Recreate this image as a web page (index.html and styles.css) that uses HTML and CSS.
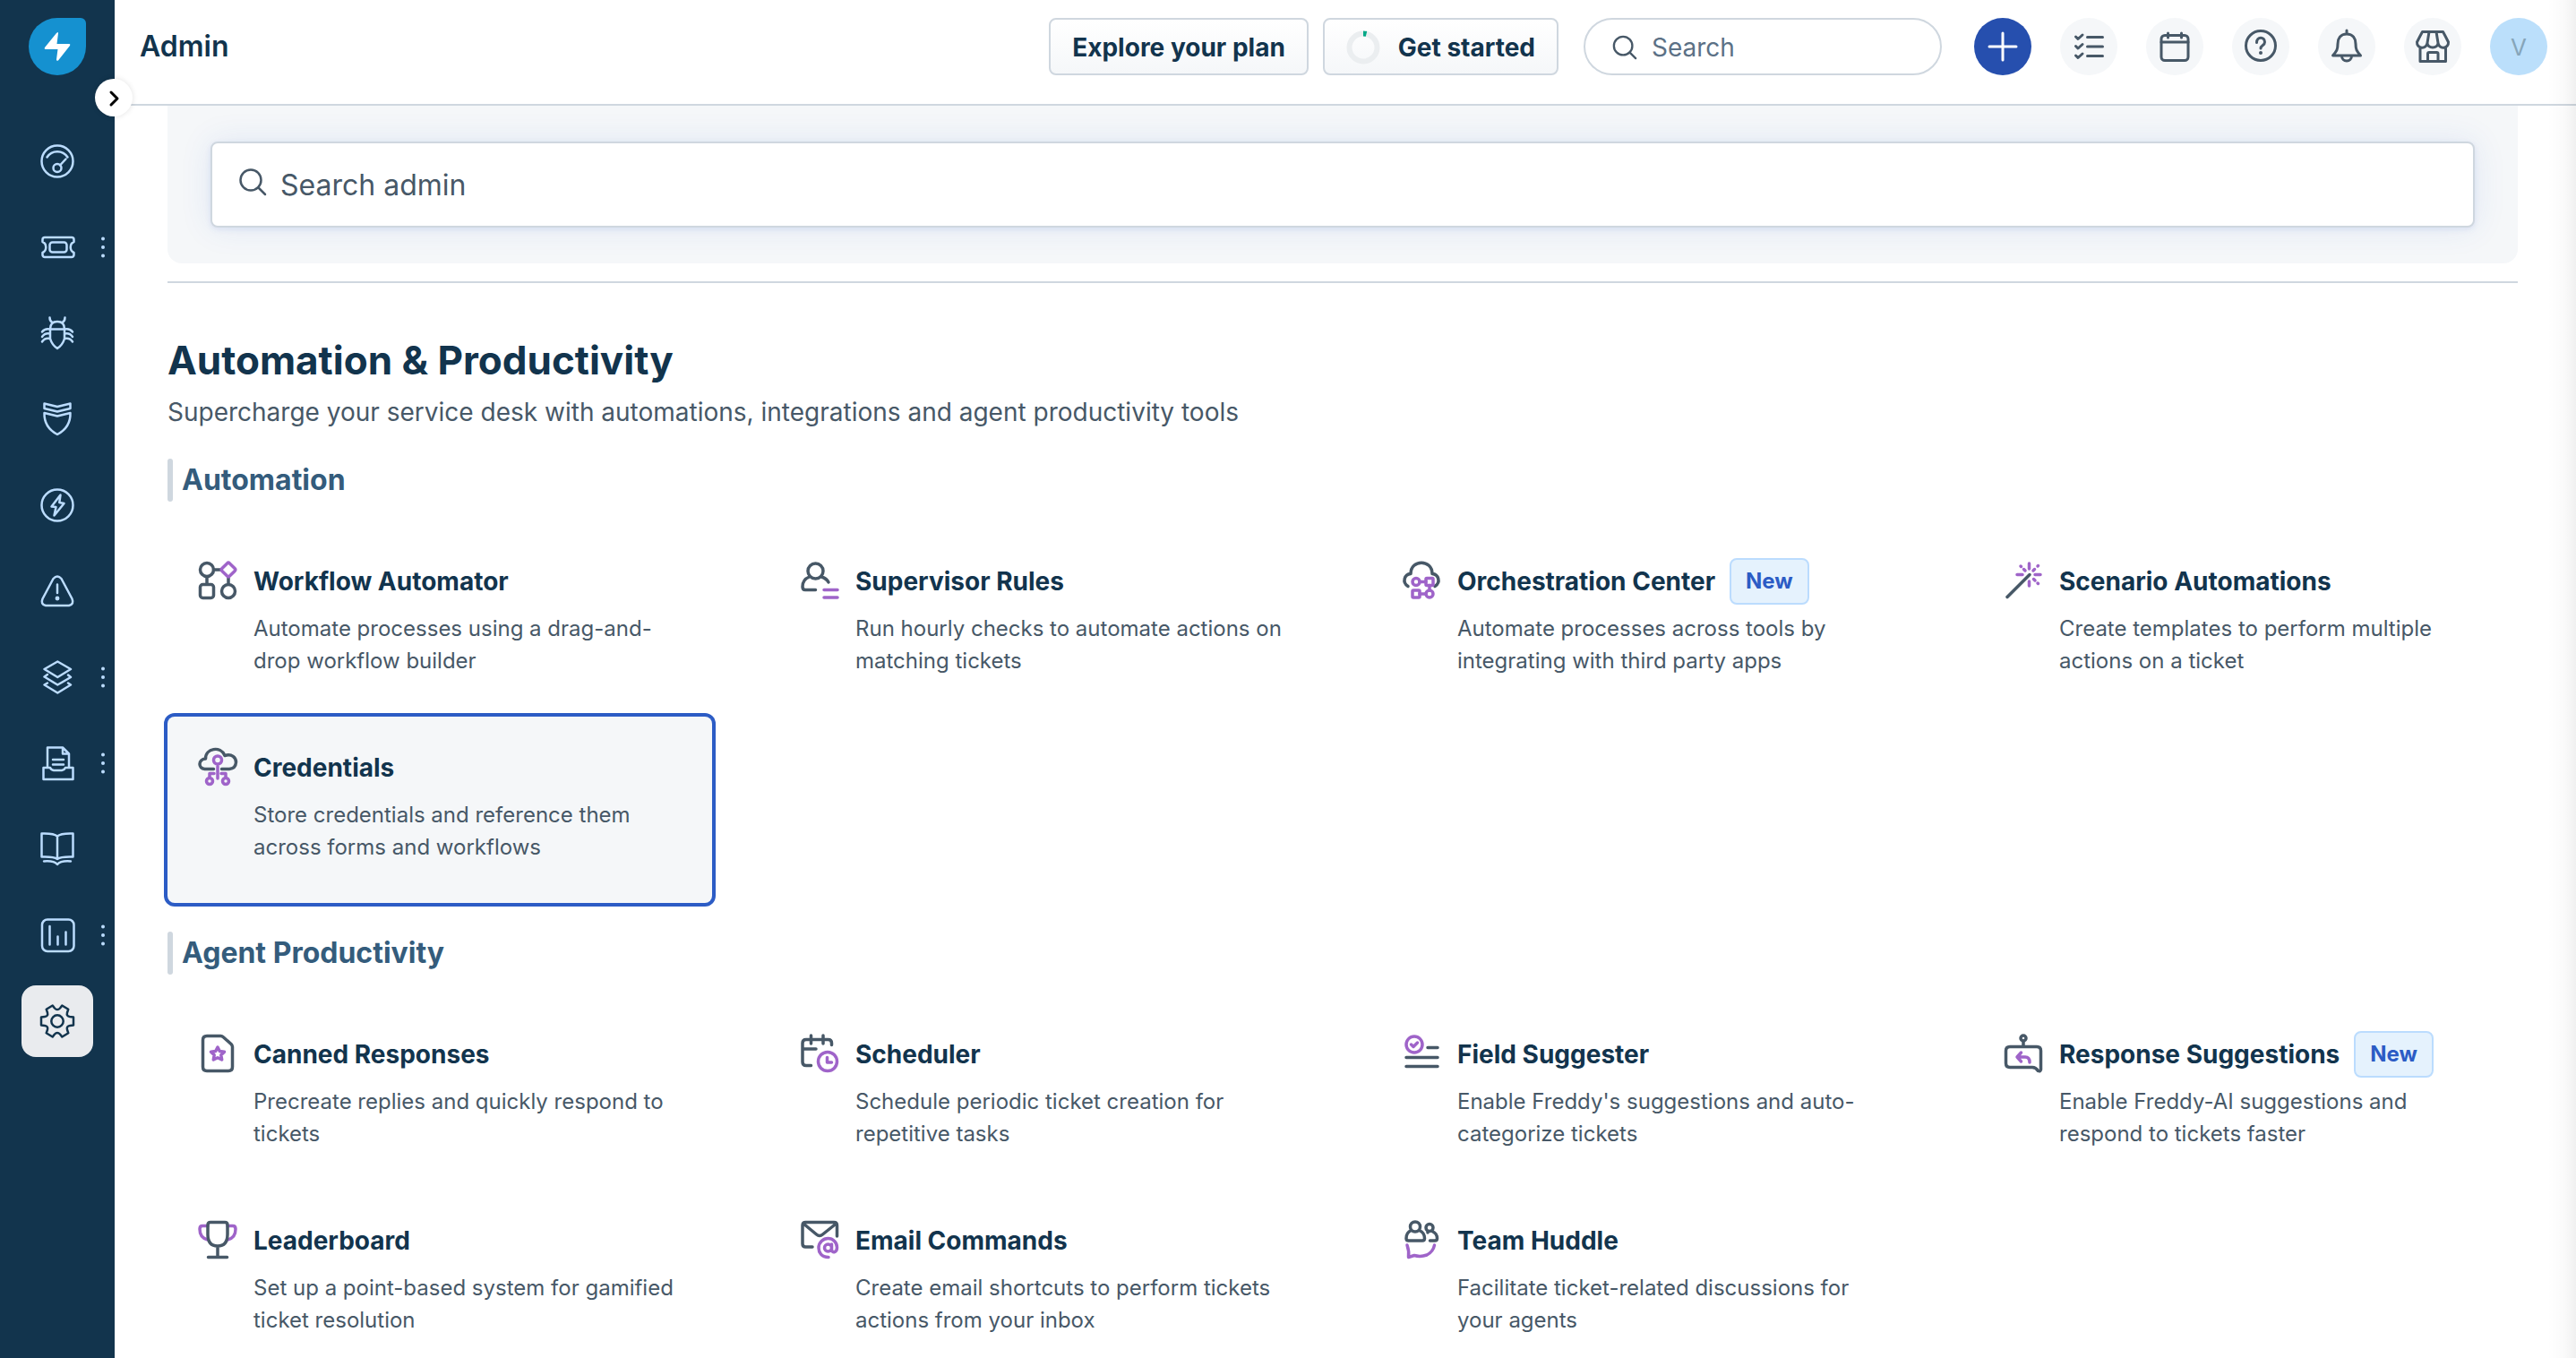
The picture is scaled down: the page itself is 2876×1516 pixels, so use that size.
FILE: index.html
```html
<!DOCTYPE html>
<html lang="en">
<head>
<meta charset="utf-8">
<title>Admin</title>
<link rel="stylesheet" href="styles.css">
</head>
<body>
<div class="shell">
  <nav class="rail" aria-label="Main">
    <a class="logo" href="#" aria-label="Home">
      <svg viewBox="0 0 64 64"><path class="logo-drop" d="M32 0H58a6 6 0 0 1 6 6V32A32 32 0 1 1 32 0Z"/><path class="logo-bolt" d="M32.500 16Q33 16 33 17L31.500 29H45.500Q47 29.500 46 31L33 47.500Q31 48.500 31 46.500L32.500 35H18.500Q17 34.500 18 33L31 17Z"/></svg>
    </a>
    <button class="expand" aria-label="Expand menu"><svg viewBox="0 0 42 42"><path d="M18 15L25 22L18 29"/></svg></button>
    <ul class="rail-list">
      <li class="rail-item"><a class="rail-link" href="#" aria-label="Dashboard"><svg viewBox="0 0 40 40"><circle cx="20" cy="20" r="17.500"/><path d="M8.500 15.500A13.600 13.600 0 0 1 31.500 15.500M23 24.500L29.500 17.500"/><circle cx="20" cy="27.500" r="4.500"/></svg></a></li>
      <li class="rail-item"><a class="rail-link" href="#" aria-label="Tickets"><svg viewBox="0 0 40 40"><path d="M6 9H36A2.500 2.500 0 0 1 38.500 11.500V14C33.500 16 33.500 24 38.500 26V28.500A2.500 2.500 0 0 1 36 31H6A2.500 2.500 0 0 1 3.500 28.500V26C8.500 24 8.500 16 3.500 14V11.500A2.500 2.500 0 0 1 6 9Z"/><rect x="11.500" y="14.500" width="19" height="11" rx="3"/></svg></a><button class="more" aria-label="More tickets options"><svg viewBox="0 0 8 24"><circle cx="4" cy="2.500" r="2"/><circle cx="4" cy="12" r="2"/><circle cx="4" cy="21.500" r="2"/></svg></button></li>
      <li class="rail-item"><a class="rail-link" href="#" aria-label="Problems"><svg viewBox="0 0 40 40"><path d="M11.500 2.500Q11.500 6.500 14.500 8M28.500 2.500Q28.500 6.500 25.500 8M12 15.500H28M12 15.500C12 10 15 7 20 7S28 10 28 15.500V26Q26 33 20 37Q14 33 12 26ZM3 18.500Q6 14.500 11.500 15.500M3 24Q6 19.500 11.500 20.500M3 29.500Q6 25 11.500 26M37 18.500Q34 14.500 28.500 15.500M37 24Q34 19.500 28.500 20.500M37 29.500Q34 25 28.500 26"/></svg></a></li>
      <li class="rail-item"><a class="rail-link" href="#" aria-label="Changes"><svg viewBox="0 0 40 40"><path d="M5.500 2.500L20 6L34.500 2.500V8L20 11.500L5.500 8ZM5.500 13L20 16.500L34.500 13Q35 29 20 37Q5 29 5.500 13Z"/></svg></a></li>
      <li class="rail-item"><a class="rail-link" href="#" aria-label="Releases"><svg viewBox="0 0 40 40"><circle cx="20" cy="20" r="17.500"/><path d="M23.500 8.500L13.500 21.500L18.500 22L16.500 31.500L27.500 18L22.300 17Z"/></svg></a></li>
      <li class="rail-item"><a class="rail-link" href="#" aria-label="Alerts"><svg viewBox="0 0 40 40"><path d="M15.500 6Q20 1 24.500 6L36.500 28.500Q39 34.500 33 36H7Q1 34.500 3.500 28.500ZM20 12.500V22"/><circle cx="20" cy="28" r="1.200"/></svg></a></li>
      <li class="rail-item"><a class="rail-link" href="#" aria-label="Assets"><svg viewBox="0 0 40 40"><path d="M20.300 2.500L35 11L20.300 20L5.500 11ZM9 17L5.500 19.500L20.300 28.500L35 20L32 17.500M9 26.500L5.500 28.500L20.300 37.500L35 28.500L32 26.500"/></svg></a><button class="more" aria-label="More assets options"><svg viewBox="0 0 8 24"><circle cx="4" cy="2.500" r="2"/><circle cx="4" cy="12" r="2"/><circle cx="4" cy="21.500" r="2"/></svg></button></li>
      <li class="rail-item"><a class="rail-link" href="#" aria-label="Contracts"><svg viewBox="0 0 40 40"><path d="M9 24.500V2.500H26L33 9.500V24.500M26 2.500V9.500H33M15 16H27M15 21.500H27M4.500 25H12Q13 27.500 16 28H25Q28 27.500 29 25H37.500V38H4.500Z"/></svg></a><button class="more" aria-label="More contracts options"><svg viewBox="0 0 8 24"><circle cx="4" cy="2.500" r="2"/><circle cx="4" cy="12" r="2"/><circle cx="4" cy="21.500" r="2"/></svg></button></li>
      <li class="rail-item"><a class="rail-link" href="#" aria-label="Solutions"><svg viewBox="0 0 40 40"><path d="M20 5.500Q16 2 2.500 2.500V28.500Q16 28 20 31Q24 28 37.500 28.500V2.500Q24 2 20 5.500V31M5 33.500Q16 32.500 20 37Q24 32.500 35 33.500"/></svg></a></li>
      <li class="rail-item"><a class="rail-link" href="#" aria-label="Analytics"><svg viewBox="0 0 40 40"><rect x="3" y="2.500" width="35.500" height="35.500" rx="6"/><path d="M11.500 10V30.500M20.500 21.500V30.500M29.500 16.500V30.500"/></svg></a><button class="more" aria-label="More analytics options"><svg viewBox="0 0 8 24"><circle cx="4" cy="2.500" r="2"/><circle cx="4" cy="12" r="2"/><circle cx="4" cy="21.500" r="2"/></svg></button></li>
      <li class="rail-item"><a class="rail-link rail-link-active" href="#" aria-label="Admin" aria-current="page"><svg viewBox="0 0 40 40"><path d="M14.700 2.500L17 5.500Q20 8.600 23 5.500L25.300 2.500L32.300 6.700L31 10.500Q30 14.500 34 15.100L38 15.500V24.500L34 25Q30 25.500 31 29.500L32.300 33.300L25.300 37.500L23 34.500Q20 31.400 17 34.500L14.700 37.500L7.700 33.300L9 29.500Q10 25.500 6 25L2 24.500V15.500L6 15Q10 14.500 9 10.500L7.700 6.700Z"/><circle cx="20" cy="20" r="6.700"/></svg></a></li>
    </ul>
  </nav>

  <div class="page">
    <header class="topbar">
      <h1 class="topbar-title">Admin</h1>
      <div class="topbar-actions">
        <button class="btn">Explore your plan</button>
        <button class="btn">
          <svg class="ring" viewBox="0 0 38 38"><circle class="ring-track" cx="19" cy="19" r="15.500"/><path class="ring-value" d="M19 3.500A15.500 15.500 0 0 1 22.500 3.900"/></svg>
          Get started
        </button>
      </div>
      <label class="search">
        <svg viewBox="0 0 30 30"><circle cx="13" cy="13" r="11"/><path d="M21 21L28 28"/></svg>
        <input type="search" placeholder="Search" aria-label="Search">
      </label>
      <div class="topbar-icons">
        <button class="round round-primary" aria-label="Create new"><svg viewBox="0 0 64 64"><path d="M17 32H47M32 17V47"/></svg></button>
        <button class="round" aria-label="Tasks"><svg viewBox="0 0 64 64"><path d="M30.500 21.500H47.500M30.500 32H47.500M30.500 42.500H47.500M17.500 21L20 23.500L25 19M17.500 31.500L20 34L25 29.500M17.500 42L20 44.500L25 40"/></svg></button>
        <button class="round" aria-label="Calendar"><svg viewBox="0 0 64 64"><rect x="17" y="19.500" width="30" height="28" rx="4"/><path d="M17 27H47M24.500 17V22M39.500 17V22"/></svg></button>
        <button class="round" aria-label="Help"><svg viewBox="0 0 64 64"><circle cx="32" cy="31" r="16.500"/><path d="M27.500 27.500C27.500 20.500 36.500 20.500 36.500 27C36.500 31 32 30.500 32 34"/><circle class="dot" cx="32" cy="39" r="2"/></svg></button>
        <button class="round" aria-label="Notifications"><svg viewBox="0 0 64 64"><path d="M32 14V18M32 18C25 18 22 23 22 29C22 35 21 37 16.500 42H47.500C43 37 42 35 42 29C42 23 39 18 32 18M26.500 42.500A5.500 5.500 0 0 0 37.500 42.500"/></svg></button>
        <button class="round" aria-label="Marketplace"><svg viewBox="0 0 64 64"><path d="M20.500 15.500H43.500Q46 20 49.500 27A5.500 5.500 0 0 1 38 28A6 5 0 0 1 26 28A5.500 5.500 0 0 1 14.500 27Q18 20 20.500 15.500ZM28 15.500L26 28M36 15.500L38 28M18 33V48.500H46.500V33M26.500 48.500V40Q26.500 38.500 28 38.500H36.500Q38 38.500 38 40V48.500"/></svg></button>
        <button class="round round-avatar" aria-label="Profile">V</button>
      </div>
    </header>

    <main class="content">
      <div class="hero">
        <label class="admin-search">
          <svg viewBox="0 0 30 30"><circle cx="13" cy="13" r="11.500"/><path d="M21.500 21.500L29 29"/></svg>
          <input type="search" placeholder="Search admin" aria-label="Search admin">
        </label>
      </div>
      <section class="area">
        <h2 class="area-title">Automation &amp; Productivity</h2>
        <p class="area-text">Supercharge your service desk with automations, integrations and agent productivity tools</p>

        <h3 class="group-title">Automation</h3>
        <ul class="cards">
          <li><a class="card" href="#">
            <svg viewBox="0 0 48 48"><circle cx="12" cy="12" r="7.500"/><rect x="4.500" y="28.500" width="15" height="15" rx="3"/><circle cx="36" cy="36" r="7.500"/><path d="M19.500 12H27M12 20V28M36 21V28"/><rect class="accent" x="30" y="6" width="12" height="12" rx="2" transform="rotate(45 36 12)"/></svg>
            <span class="card-body"><span class="card-title">Workflow Automator</span><span class="card-text">Automate processes using a drag-and-drop workflow builder</span></span></a></li>
          <li><a class="card" href="#">
            <svg viewBox="0 0 48 48"><circle cx="19.500" cy="13.500" r="8.500"/><path d="M12.500 20Q5 23 5 31Q5 34.500 8 34.500H19.500M26.500 20Q32 22 34 26"/><path class="accent" d="M29 34.500H44M29 43H44"/></svg>
            <span class="card-body"><span class="card-title">Supervisor Rules</span><span class="card-text">Run hourly checks to automate actions on matching tickets</span></span></a></li>
          <li><a class="card" href="#">
            <svg viewBox="0 0 48 48"><path d="M9 30.500C2 26 5 17 12 16.500C12 0 36 0 36 16.500C43 17 46 26 39 30.500"/><g class="accent"><circle cx="18" cy="25.500" r="4"/><rect x="29" y="21.500" width="8" height="8" rx="1"/><rect x="14" y="35" width="8" height="8" rx="1"/><circle cx="33" cy="39" r="4"/><path d="M22 25.500H29M22 39H29M33 29.500V35"/></g></svg>
            <span class="card-body"><span class="card-title">Orchestration Center <span class="badge">New</span></span><span class="card-text">Automate processes across tools by integrating with third party apps</span></span></a></li>
          <li><a class="card" href="#">
            <svg viewBox="0 0 48 48"><path d="M6 42.500L31 17.500"/><path class="accent" d="M30.500 5V11M30.500 25V30M17 17.500H23M37 17.500H43M21 8L21.500 8.500M24.500 11.500L26 13M40 8L40.500 7.500M35 13L36.500 11.500M35.500 22.500L37 24M40 27L40.500 27.500"/></svg>
            <span class="card-body"><span class="card-title">Scenario Automations</span><span class="card-text">Create templates to perform multiple actions on a ticket</span></span></a></li>
          <li><a class="card card-active" href="#">
            <svg viewBox="0 0 48 48"><path d="M19.500 26.500H9.500C2 26 2 15.500 10.500 15C10.500 3.500 27 0 32 11.500C40 9 44.500 14 44.500 19Q44 26 37 26.500H28.500"/><g class="accent"><circle cx="24" cy="16.500" r="4.500"/><path d="M24 23.500V37M15 36V31.500H20M33 36V31.500H28"/><circle cx="15" cy="40" r="3.500"/><circle cx="33" cy="40" r="3.500"/></g></svg>
            <span class="card-body"><span class="card-title">Credentials</span><span class="card-text">Store credentials and reference them across forms and workflows</span></span></a></li>
        </ul>

        <h3 class="group-title">Agent Productivity</h3>
        <ul class="cards">
          <li><a class="card" href="#">
            <svg viewBox="0 0 48 48"><path d="M12 4.500H27.500Q29 4.500 30 5.500L39 13.500Q40.500 15 40.500 16.500V39Q40.500 43.500 36 43.500H12Q7.500 43.500 7.500 39V9Q7.500 4.500 12 4.500Z"/><path class="accent" d="M24 17L26.300 21.500L31.500 22.200L27.800 25.800L28.700 31L24 28.700L19.300 31L20.200 25.800L16.500 22.200L21.700 21.500Z"/></svg>
            <span class="card-body"><span class="card-title">Canned Responses</span><span class="card-text">Precreate replies and quickly respond to tickets</span></span></a></li>
          <li><a class="card" href="#">
            <svg viewBox="0 0 48 48"><path d="M14.500 37.500H9Q5 37.500 5 33.500V12.500Q5 8.500 9 8.500H33.500Q37.500 8.500 37.500 12.500V14.500M5 19H20M14.500 4V13M28 4V13"/><g class="accent"><circle cx="33" cy="33" r="10.500"/><path d="M32.500 28.500V34H37.500"/></g></svg>
            <span class="card-body"><span class="card-title">Scheduler</span><span class="card-text">Schedule periodic ticket creation for repetitive tasks</span></span></a></li>
          <li><a class="card" href="#">
            <svg viewBox="0 0 48 48"><g class="accent"><circle cx="16" cy="14" r="9"/><path d="M12.500 14L15 16.500L19.500 12"/></g><path d="M31 17.500H42M7 28.500H42M7 38.500H42"/></svg>
            <span class="card-body"><span class="card-title">Field Suggester</span><span class="card-text">Enable Freddy's suggestions and auto-categorize tickets</span></span></a></li>
          <li><a class="card" href="#">
            <svg viewBox="0 0 48 48"><circle cx="24" cy="7" r="3"/><path d="M24 10V16.500M9 16.500H39Q43.500 16.500 43.500 21V42Q43 44.500 40.500 43.500Q38 39.500 34 39.500H9Q4.500 39.500 4.500 35V21Q4.500 16.500 9 16.500Z"/><path class="accent" d="M21.500 23L17 28L21.500 33M17 28H26Q31 28 31 34"/></svg>
            <span class="card-body"><span class="card-title">Response Suggestions <span class="badge">New</span></span><span class="card-text">Enable Freddy-AI suggestions and respond to tickets faster</span></span></a></li>
          <li><a class="card" href="#">
            <svg viewBox="0 0 48 48"><path class="accent" d="M13 8.500H7Q4 8.500 4 12Q4 22 13 24M35 8.500H41Q44 8.500 44 12Q44 22 35 24"/><path d="M16 4.500H32Q35 4.500 35 7.500V18Q35 31 24 31Q13 31 13 18V7.500Q13 4.500 16 4.500ZM24 31V43M13.500 43.500H34.500"/></svg>
            <span class="card-body"><span class="card-title">Leaderboard</span><span class="card-text">Set up a point-based system for gamified ticket resolution</span></span></a></li>
          <li><a class="card" href="#">
            <svg viewBox="0 0 48 48"><path d="M16 32H8.500Q5 32 5 28.500V8Q5 4.500 8.500 4.500H40Q43.500 4.500 43.500 8V20M6 6L20.500 18Q24 21 27.500 18L42.500 6"/><path class="accent" d="M34 43.500C26 43.500 23 38 23 33C23 27 28 22.500 33.500 22.500C39 22.500 43.500 27 43.500 32.500C43.500 39 37.500 39 37.500 35V29M37.500 33A4 4 0 1 1 29.500 33A4 4 0 1 1 37.500 33"/></svg>
            <span class="card-body"><span class="card-title">Email Commands</span><span class="card-text">Create email shortcuts to perform tickets actions from your inbox</span></span></a></li>
          <li><a class="card" href="#">
            <svg viewBox="0 0 48 48"><circle cx="17" cy="9.500" r="5.500"/><path d="M12.500 13.500Q7 16 7 22.500Q7 25 9.500 25H25Q27.500 25 27.500 22.500Q27.500 16 21.500 13.500M36 14.500Q41.500 17 41.500 22.500Q41.500 25 39 25H33.500M31 15V16"/><circle cx="33" cy="10.500" r="4"/><path class="accent" d="M8 30Q10.500 37 9.500 43.500L16 41.500Q23 43.500 30 41Q37 37.500 38.500 30"/></svg>
            <span class="card-body"><span class="card-title">Team Huddle</span><span class="card-text">Facilitate ticket-related discussions for your agents</span></span></a></li>
        </ul>
      </section>
    </main>
  </div>
</div>
</body>
</html>
```
FILE: styles.css
```css
* { box-sizing: border-box; }
body {
  margin: 0;
  background: #fff;
  color: #12344d;
  font-family: Inter, "Liberation Sans", sans-serif;
}
h1, h2, h3, p, ul { margin: 0; padding: 0; }
ul { list-style: none; }
a { color: inherit; text-decoration: none; }
button { padding: 0; border: 0; background: none; color: inherit; font: inherit; cursor: pointer; }
input { min-width: 0; padding: 0; border: 0; outline: 0; background: none; color: #12344d; font: inherit; }
svg {
  display: block;
  flex: none;
  fill: none;
  stroke: currentColor;
  stroke-width: 3;
  stroke-linecap: round;
  stroke-linejoin: round;
}

.shell { position: relative; display: flex; height: 100vh; overflow: hidden; }
.shell::after {
  content: "";
  position: absolute;
  top: 0;
  right: 0;
  bottom: 0;
  width: 32px;
  background: linear-gradient(to left, rgba(0, 0, 0, .06), rgba(0, 0, 0, .02) 40%, transparent);
  pointer-events: none;
}

/* navigation rail */
.rail { position: relative; z-index: 2; flex: none; width: 128px; padding-top: 20px; background: #12344d; }
.logo { display: block; width: 64px; margin: 0 auto 56px; }
.logo svg { width: 64px; height: 64px; stroke: none; }
.logo-drop { fill: #1591d0; }
.logo-bolt { fill: #fff; }
.expand {
  position: absolute;
  top: 88px;
  right: -20px;
  width: 42px;
  height: 42px;
  border-radius: 50%;
  background: #fff;
  box-shadow: 0 0 6px rgba(0, 0, 0, .12);
  color: #000;
}
.expand svg { width: 42px; height: 42px; }
.rail-list { display: flex; flex-direction: column; gap: 16px; }
.rail-item { display: grid; grid-template-columns: 24px 80px 24px; color: #bbdcfe; }
.rail-link { grid-column: 2; display: grid; place-items: center; height: 80px; border-radius: 16px; }
.rail-link svg { width: 40px; height: 40px; stroke-width: 2.5; }
.rail-link-active { background: #e9ebee; color: #12344d; }
.more { padding-right: 2px; display: grid; place-items: center; }
.more svg { width: 8px; height: 24px; fill: currentColor; stroke: none; }

/* top bar */
.page { flex: 1; min-width: 0; }
.topbar {
  display: flex;
  align-items: center;
  height: 118px;
  padding: 0 32px 12px 28px;
  border-bottom: 2px solid #cfd7df;
  background: #fff;
}
.topbar-title { flex: 1; font-size: 32px; line-height: 40px; font-weight: 600; }
.topbar-actions { display: flex; gap: 16px; }
.btn {
  display: flex;
  align-items: center;
  gap: 20px;
  height: 64px;
  padding: 2px 24px 0;
  border: 2px solid #cfd7df;
  border-radius: 8px;
  background: linear-gradient(#fff, #f5f7f9);
  font-size: 28px;
  line-height: 40px;
  font-weight: 700;
}
.ring { width: 38px; height: 38px; stroke-width: 6; stroke-linecap: butt; }
.ring-track { stroke: #ebeef0; }
.ring-value { stroke: #00a886; }
.search {
  display: flex;
  align-items: center;
  gap: 16px;
  width: 400px;
  height: 64px;
  margin: 0 36px 0 28px;
  padding: 2px 28px 0 30px;
  border: 2px solid #cfd7df;
  border-radius: 32px;
  color: #475867;
  font-size: 28px;
}
.search svg { width: 28px; height: 28px; stroke-width: 2.5; }
.search input { flex: 1; }
.search input::placeholder { color: #5c7186; opacity: 1; }
.topbar-icons { display: flex; gap: 32px; }
.round { width: 64px; height: 64px; border-radius: 50%; background: #f5f7f9; color: #475867; }
.round svg { width: 64px; height: 64px; stroke-width: 3; }
.round .dot { fill: currentColor; stroke: none; }
.round-primary { background: #264fae; color: #fff; }
.round-avatar { background: #bbdffb; color: #86a5b9; font-size: 26px; }

/* content */
.content { padding: 0 65px 0 59px; }
.hero { padding: 40px 48px; border-radius: 0 0 16px 16px; background: #f5f7f9; }
.admin-search {
  display: flex;
  align-items: center;
  gap: 16px;
  height: 96px;
  padding: 0 30px;
  border: 2px solid #cfd7df;
  border-radius: 8px;
  background: #fff;
  box-shadow: 0 2px 6px rgba(44, 92, 197, .1), 0 0 36px rgba(44, 92, 197, .1);
  color: #475867;
  font-size: 32px;
}
.admin-search svg { width: 30px; height: 30px; margin-bottom: 6px; stroke-width: 2.5; overflow: visible; }
.admin-search input { flex: 1; }
.admin-search input::placeholder { color: #475867; opacity: 1; }

.area { margin-top: 20px; padding-top: 58px; border-top: 2px solid #cfd7df; }
.area-title { font-size: 44px; line-height: 56px; font-weight: 700; }
.area-text { margin: 10px 0 32px; color: #475867; font-size: 28px; line-height: 40px; }
.group-title {
  display: flex;
  gap: 10px;
  margin-bottom: 32px;
  color: #345c7c;
  font-size: 32px;
  line-height: 48px;
  font-weight: 700;
}
.group-title::before { content: ""; width: 6px; border-radius: 3px; background: #cfd7df; }

.cards { display: grid; grid-template-columns: repeat(4, 1fr); column-gap: 64px; margin-bottom: 32px; }
.card { display: flex; gap: 16px; height: 100%; padding: 32px 32px 44px; border-radius: 8px; }
.card-active { background: #f5f7f9; box-shadow: 0 0 0 4px #2c5cc5; }
.card > svg { width: 48px; height: 48px; color: #475867; stroke-width: 3.5; }
.accent { stroke: #9f64c9; }
.card-body { flex: 1; min-width: 0; }
.card-title {
  display: flex;
  align-items: center;
  gap: 16px;
  height: 50px;
  margin-bottom: 10px;
  font-size: 28px;
  font-weight: 700;
  white-space: nowrap;
}
.badge {
  padding: 6px 16px;
  border: 2px solid #bbdcfe;
  border-radius: 8px;
  background: #e5f2fd;
  color: #2c5cc5;
  font-size: 24px;
  line-height: 36px;
}
.card-text { display: block; color: #475867; font-size: 24px; line-height: 36px; }
```
